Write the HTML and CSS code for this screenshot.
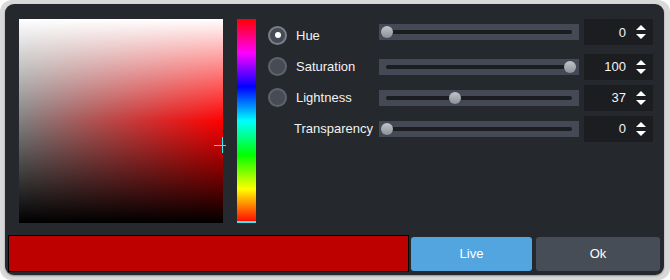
FILE: index.html
```html
<!DOCTYPE html>
<html>
<head>
<meta charset="utf-8">
<link rel="stylesheet" href="styles.css">
</head>
<body>
<div class="frame">
  <div class="panel">
    <div class="top">
      <div class="sv">
        <div class="cross-h"></div>
        <div class="cross-v"></div>
      </div>
      <div class="hue"><div class="hue-marker"></div></div>
      <div class="controls">
        <span class="radio on"></span>
        <span class="label">Hue</span>
        <div class="slider up"><div class="groove"></div><div class="rail"><div class="knob" style="left:0%"></div></div></div>
        <div class="spin up"><span>0</span><svg width="10" height="14" viewBox="0 0 10 14"><polygon points="0,5 5,0 10,5" fill="#fff"/><polygon points="0,9 10,9 5,14" fill="#fff"/></svg></div>

        <span class="radio"></span>
        <span class="label">Saturation</span>
        <div class="slider"><div class="groove"></div><div class="rail"><div class="knob" style="left:100%"></div></div></div>
        <div class="spin"><span>100</span><svg width="10" height="14" viewBox="0 0 10 14"><polygon points="0,5 5,0 10,5" fill="#fff"/><polygon points="0,9 10,9 5,14" fill="#fff"/></svg></div>

        <span class="radio"></span>
        <span class="label">Lightness</span>
        <div class="slider"><div class="groove"></div><div class="rail"><div class="knob" style="left:37%"></div></div></div>
        <div class="spin"><span>37</span><svg width="10" height="14" viewBox="0 0 10 14"><polygon points="0,5 5,0 10,5" fill="#fff"/><polygon points="0,9 10,9 5,14" fill="#fff"/></svg></div>

        <span class="label wide">Transparency</span>
        <div class="slider"><div class="groove"></div><div class="rail"><div class="knob" style="left:0%"></div></div></div>
        <div class="spin"><span>0</span><svg width="10" height="14" viewBox="0 0 10 14"><polygon points="0,5 5,0 10,5" fill="#fff"/><polygon points="0,9 10,9 5,14" fill="#fff"/></svg></div>
      </div>
    </div>
    <div class="bottom">
      <div class="swatch"></div>
      <button class="btn live">Live</button>
      <button class="btn ok">Ok</button>
    </div>
  </div>
</div>
</body>
</html>
```

FILE: styles.css
```css
html, body {
  margin: 0;
  padding: 0;
  background: #ffffff;
}

.frame {
  width: 670px;
  height: 280px;
  box-sizing: border-box;
  padding: 4px 6px 5px 5px;
  background: #d9d9d9;
  border-radius: 12px;
  font-family: "Liberation Sans", Arial, sans-serif;
  font-size: 13px;
  color: #f2f2f2;
}

.panel {
  width: 659px;
  height: 271px;
  box-sizing: border-box;
  background: #25282d;
  border-radius: 9px;
  box-shadow: 0 1px 2px rgba(0, 0, 0, 0.35);
  padding-top: 15px;
  display: flex;
  flex-direction: column;
}

.top {
  display: flex;
  height: 204px;
  padding-left: 14px;
}

.sv {
  position: relative;
  width: 204px;
  height: 204px;
  flex: none;
  background:
    linear-gradient(to bottom, #ffffff 0%, rgba(255, 255, 255, 0) 50%, rgba(0, 0, 0, 0) 50%, #000000 100%),
    linear-gradient(to right, #808080, #ff0000);
}

.cross-h {
  position: absolute;
  left: 195px;
  top: 126px;
  width: 12px;
  height: 1px;
  background: #45e3f2;
}

.cross-v {
  position: absolute;
  left: 203px;
  top: 118px;
  width: 1px;
  height: 16px;
  background: #45e3f2;
}

.hue {
  position: relative;
  width: 19px;
  height: 204px;
  flex: none;
  margin-left: 14px;
  background: linear-gradient(to bottom, #ff0000, #ff00ff, #0000ff, #00ffff, #00ff00, #ffff00, #ff0000);
}

.hue-marker {
  position: absolute;
  left: 0;
  right: 0;
  bottom: 0;
  height: 2px;
  background: #45e3f2;
}

.controls {
  margin-left: 12px;
  display: grid;
  grid-template-columns: 19px 92px 200px 74px;
  grid-template-rows: 32px 31px 31px 31px;
  align-items: center;
  align-content: start;
}

.radio {
  width: 19px;
  height: 19px;
  box-sizing: border-box;
  border-radius: 50%;
  border: 2px solid #5f636b;
  background: #464b55;
  display: flex;
  align-items: center;
  justify-content: center;
}

.radio.on {
  border-color: #7a7e86;
}

.radio.on::after {
  content: "";
  width: 6px;
  height: 6px;
  border-radius: 50%;
  background: #ffffff;
}

.label {
  padding-left: 9px;
  white-space: nowrap;
}

.label.wide {
  grid-column: 1 / 3;
  padding-left: 26px;
}

.slider {
  position: relative;
  width: 200px;
  height: 16px;
  background: #444955;
}

.up {
  margin-bottom: 6px;
}

.groove {
  position: absolute;
  left: 7px;
  right: 7px;
  top: 6px;
  height: 4px;
  border-radius: 2px;
  background: #1b1d20;
}

.rail {
  position: absolute;
  left: 8px;
  right: 9px;
  top: 0;
  bottom: 0;
}

.knob {
  position: absolute;
  top: 2px;
  width: 12px;
  height: 12px;
  margin-left: -6px;
  border-radius: 50%;
  background: linear-gradient(to bottom, #c2c5ca, #8b9098);
}

.spin {
  margin-left: 5px;
  width: 69px;
  height: 26px;
  box-sizing: border-box;
  background: #1b1d20;
  display: flex;
  align-items: center;
  justify-content: flex-end;
  gap: 10px;
  padding-right: 7px;
  color: #f5f5f5;
}

.spin svg {
  display: block;
}

.bottom {
  display: flex;
  align-items: center;
  margin-top: 12px;
  height: 37px;
  padding-left: 3px;
  gap: 2px;
}

.swatch {
  width: 401px;
  height: 37px;
  box-sizing: border-box;
  border: 1px solid #000000;
  background: #bd0000;
}

.btn {
  height: 34px;
  border: none;
  border-radius: 3px;
  color: #ffffff;
  font-family: "Liberation Sans", Arial, sans-serif;
  font-size: 13px;
  padding: 0;
}

.live {
  width: 121px;
  background: #52a5de;
}

.ok {
  width: 124px;
  margin-left: 2px;
  background: #474d57;
}
```
